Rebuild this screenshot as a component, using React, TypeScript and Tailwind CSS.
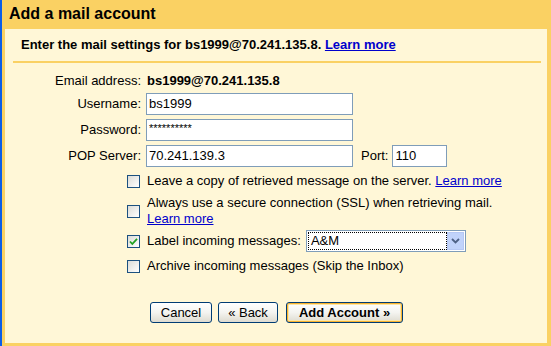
import React from "react";

const Field: React.FC<{ value: string; w: string; small?: boolean }> = ({ value, w, small }) => {
  return (
    <div className={`${w} h-[22px] bg-white border border-[#7f9db9] px-[2px] flex items-center`}>
      {small ? (
        <span className="text-[11px] leading-none self-start mt-[3px]">{value}</span>
      ) : (
        <span>{value}</span>
      )}
    </div>
  );
};

const Check: React.FC<{ checked?: boolean }> = ({ checked }) => {
  return (
    <div className="w-[13px] h-[13px] shrink-0 border border-[#1c5180] bg-gradient-to-br from-[#dcdcd7] to-white flex items-center justify-center">
      {checked && (
        <svg width="9" height="9" viewBox="0 0 9 9">
          <path d="M1 4.5 L3.3 7 L8 1.8" fill="none" stroke="#21a121" strokeWidth="1.8" />
        </svg>
      )}
    </div>
  );
};

const Btn: React.FC<{ label: React.ReactNode; w: string; main?: boolean }> = ({ label, w, main }) => {
  return (
    <div className={`${w} h-[21px] rounded-[3px] border border-[#003c74] bg-gradient-to-b from-white via-[#f4f4f0] to-[#dedbd0] flex items-center justify-center ${main ? "shadow-[inset_0_0_0_1px_#f8b330,inset_0_0_0_2px_#fce7a8] font-bold" : ""}`}>
      {label}
    </div>
  );
};

export default function App() {
  return (
    <div className="w-[551px] h-[346px] flex bg-[#0b5de8] text-[13px] leading-[16px] text-black font-['Liberation_Sans',Arial,sans-serif]">
      <div className="ml-[2px] flex-1 bg-[#fad163] pl-[3px] pr-[4px] pb-[3px] flex flex-col">
        <div className="h-[29px] pl-[4px] pt-[5px] text-[16px] leading-[18px] font-bold">Add a mail account</div>
        <div className="flex-1 bg-[#fff7d7] flex flex-col">
          <div className="mx-[8px] mr-[6px] pl-[8px] pt-[8px] pb-[8px] border-b-2 border-[#fad163] font-bold">
            Enter the mail settings for bs1999@70.241.135.8.{" "}
            <span className="text-[#0000cc] underline">Learn more</span>
          </div>

          <div className="mt-[9px] flex flex-col gap-[4px]">
            <div className="flex items-center h-[17px]">
              <div className="w-[136px] text-right">Email address:</div>
              <div className="ml-[6px] font-bold">bs1999@70.241.135.8</div>
            </div>
            <div className="flex items-center h-[22px]">
              <div className="w-[136px] text-right">Username:</div>
              <div className="ml-[5px]">
                <Field value="bs1999" w="w-[207px]" />
              </div>
            </div>
            <div className="flex items-center h-[22px]">
              <div className="w-[136px] text-right">Password:</div>
              <div className="ml-[5px]">
                <Field value="**********" w="w-[207px]" small />
              </div>
            </div>
            <div className="flex items-center h-[22px]">
              <div className="w-[136px] text-right">POP Server:</div>
              <div className="ml-[5px]">
                <Field value="70.241.139.3" w="w-[207px]" />
              </div>
              <div className="ml-[8px]">Port:</div>
              <div className="ml-[4px]">
                <Field value="110" w="w-[55px]" />
              </div>
            </div>
          </div>

          <div className="mt-[6px] ml-[122px] flex flex-col">
            <div className="flex items-center gap-[7px] h-[16px]">
              <Check />
              <div>
                Leave a copy of retrieved message on the server.{" "}
                <span className="text-[#0000cc] underline">Learn more</span>
              </div>
            </div>
            <div className="mt-[6px] flex items-center gap-[7px]">
              <Check />
              <div>
                Always use a secure connection (SSL) when retrieving mail.
                <br />
                <span className="text-[#0000cc] underline">Learn more</span>
              </div>
            </div>
            <div className="mt-[3px] flex items-center gap-[7px] h-[22px]">
              <Check checked />
              <div>Label incoming messages:</div>
              <div className="ml-[-2px] w-[160px] h-[22px] bg-white border border-[#7f9db9] flex items-center p-[1px]">
                <div className="flex-1 h-full border border-dotted border-black flex items-center pl-[2px]">A&amp;M</div>
                <div className="w-[17px] h-full bg-[#c1d3fb] border border-[#b6c8f4] flex items-center justify-center">
                  <svg width="9" height="6" viewBox="0 0 9 6">
                    <path d="M1 1 L4.5 4.5 L8 1" fill="none" stroke="#4d6185" strokeWidth="1.8" />
                  </svg>
                </div>
              </div>
            </div>
            <div className="mt-[6px] flex items-center gap-[7px] h-[16px]">
              <Check />
              <div>Archive incoming messages (Skip the Inbox)</div>
            </div>
          </div>

          <div className="mt-[28px] ml-[145px] flex">
            <Btn label="Cancel" w="w-[62px]" />
            <div className="ml-[6px]">
              <Btn label={<span>« Back</span>} w="w-[60px]" />
            </div>
            <div className="ml-[8px]">
              <Btn label={<span>Add Account »</span>} w="w-[117px]" main />
            </div>
          </div>
        </div>
      </div>
    </div>
  );
}
